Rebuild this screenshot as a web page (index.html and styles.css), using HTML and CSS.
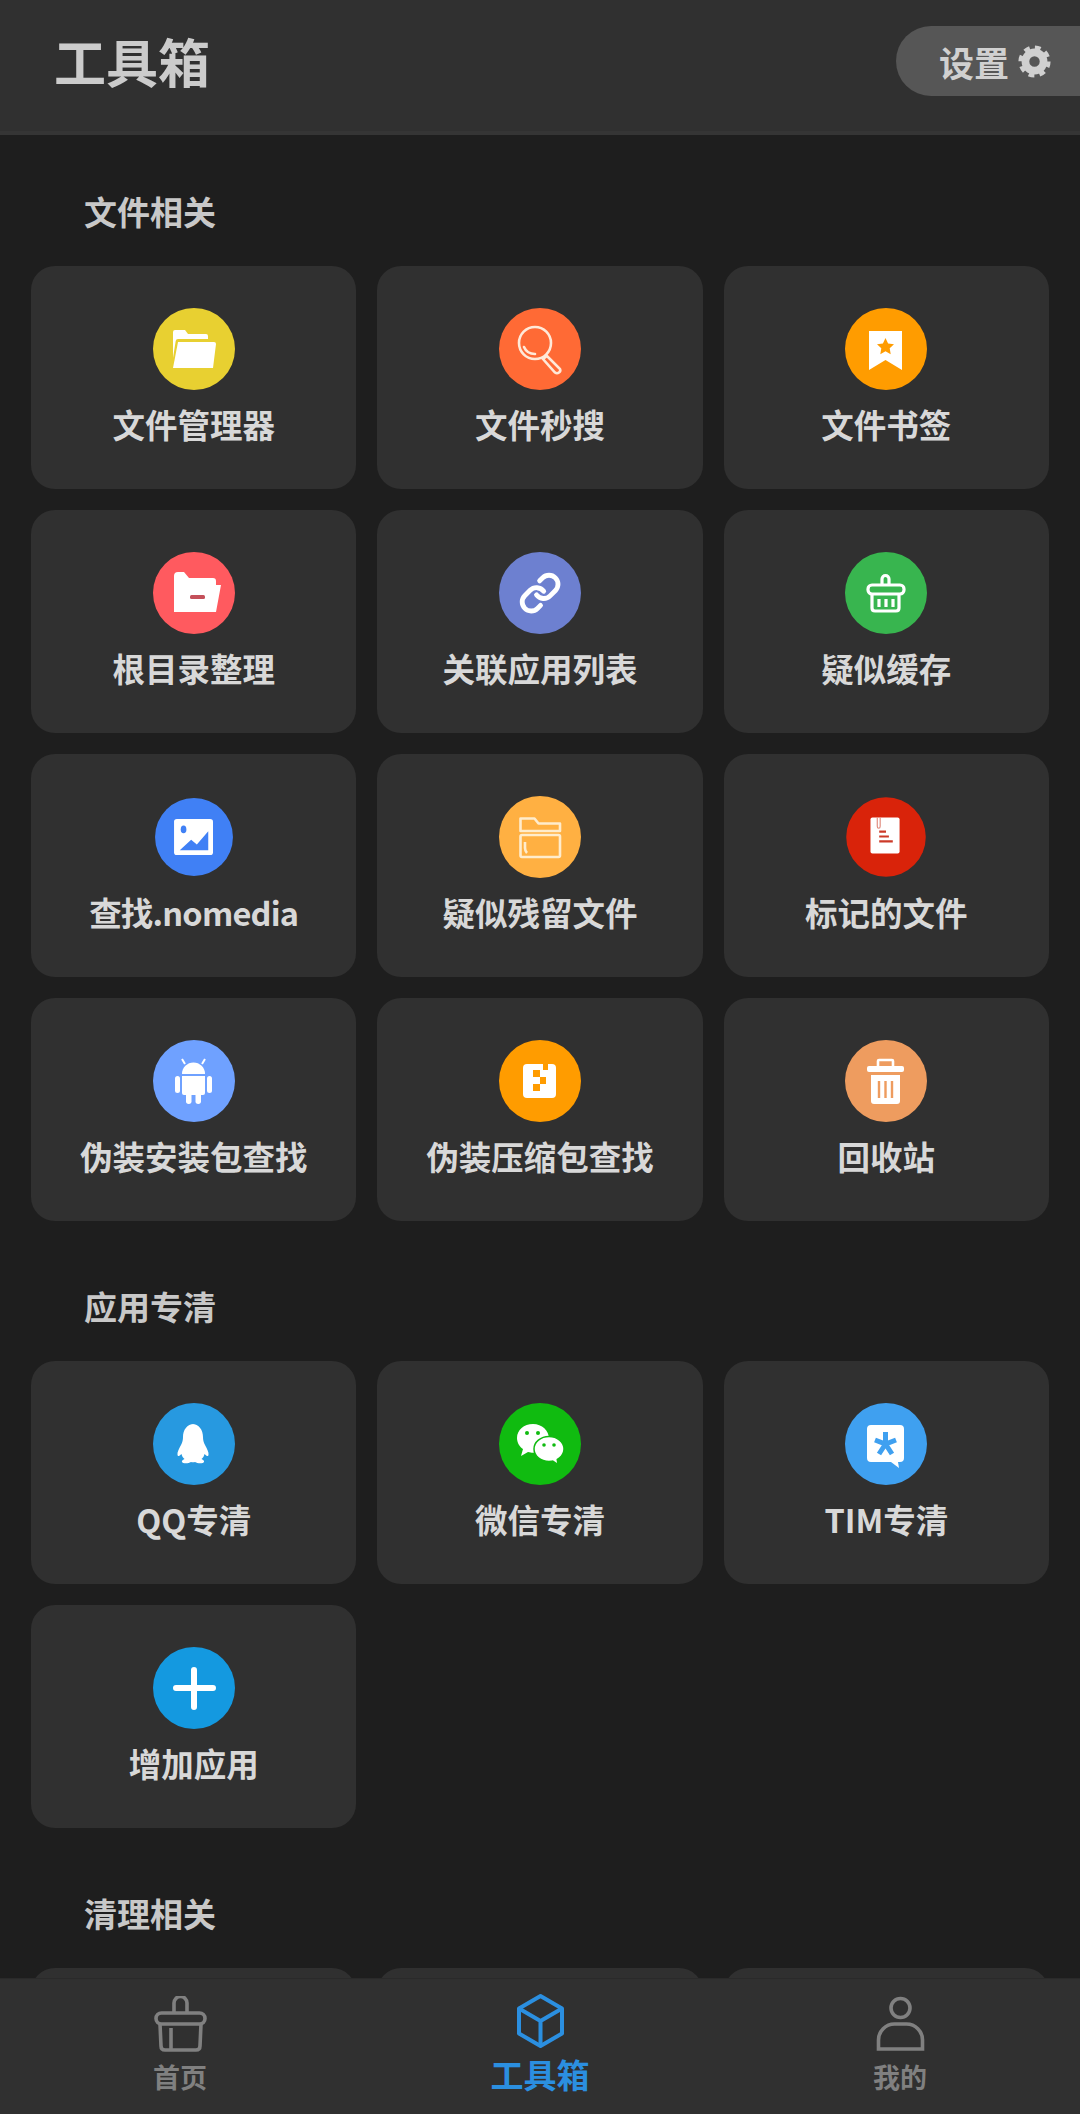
FILE: index.html
```html
<!DOCTYPE html>
<html lang="zh-CN">
<head>
    <meta charset="UTF-8">
    <meta name="viewport" content="width=device-width, initial-scale=1.0">
    <title>工具箱</title>
    <link rel="stylesheet" href="styles.css">
</head>
<body>
<div class="app">
  <header class="topbar">
    <h1>工具箱</h1>
    <div class="settings">
      <span>设置</span>
      <svg class="gear" viewBox="0 0 24 24">
        <circle cx="12" cy="12" r="6.6" fill="none" stroke="currentColor" stroke-width="5.6"/>
        <circle cx="12" cy="12" r="10.2" fill="none" stroke="currentColor" stroke-width="3" stroke-dasharray="4.2 3.81"/>
      </svg>
    </div>
  </header>

  <main class="content">
    <section class="section">
      <h2>文件相关</h2>
      <div class="grid">
        <div class="card">
          <span class="icon c-yellow"><svg viewBox="0 0 82 82">
            <path fill="#fff" d="M20 24q0-2 2-2h10l3 4h18q2 0 2 2v3H25q-2 0-2.3 2L20 50z"/>
            <path fill="#fff" d="M25 34h36q2 0 2 2l-3 24H20z"/>
          </svg></span>
          <p>文件管理器</p>
        </div>
        <div class="card">
          <span class="icon c-tomato"><svg viewBox="0 0 82 82">
            <g fill="none" stroke="#ffe9d8" stroke-width="2.6" stroke-linecap="round">
              <circle cx="36" cy="35" r="16"/>
              <path d="M25 39q3 7 11 7"/>
              <path d="M44 51l4-3 13 13q1 2-1 3.5t-4 0z"/>
            </g>
          </svg></span>
          <p>文件秒搜</p>
        </div>
        <div class="card">
          <span class="icon c-amber"><svg viewBox="0 0 82 82">
            <path fill="#fff" d="M24 23h33v39L40.5 52 24 62z"/>
            <path fill="currentColor" d="M40.5 30l2.6 5.4 5.9.8-4.3 4.1 1 5.9-5.2-2.9-5.2 2.9 1-5.9-4.3-4.1 5.900-.8z"/>
          </svg></span>
          <p>文件书签</p>
        </div>
        <div class="card">
          <span class="icon c-coral"><svg viewBox="0 0 82 82">
            <path fill="#fff" d="M21 24q0-4 4-4h6l5 6h24q3 0 3 3v4h5l-5 27H21z"/>
            <rect x="37" y="43" width="15" height="4" rx="1.5" fill="#c4505a"/>
          </svg></span>
          <p>根目录整理</p>
        </div>
        <div class="card">
          <span class="icon c-indigo"><svg viewBox="0 0 82 82">
            <g transform="translate(19.5 19.5) scale(1.8)" fill="none" stroke="#fff" stroke-width="2.7" stroke-linecap="round" stroke-linejoin="round">
              <path d="M10 13a5 5 0 0 0 7.54.54l3-3a5 5 0 0 0-7.07-7.07l-1.72 1.71"/>
              <path d="M14 11a5 5 0 0 0-7.54-.54l-3 3a5 5 0 0 0 7.07 7.07l1.71-1.71"/>
            </g>
          </svg></span>
          <p>关联应用列表</p>
        </div>
        <div class="card">
          <span class="icon c-green"><svg viewBox="0 0 82 82">
            <g fill="none" stroke="#fff" stroke-width="3.2" stroke-linejoin="round">
              <path d="M37 32v-5a3.5 3.5 0 0 1 7 0v5"/>
              <rect x="23" y="33" width="36" height="9" rx="4"/>
              <path d="M27 42v14q0 3 3 3h21q3 0 3-3V42"/>
              <path d="M34 47v8M41 47v8M48 47v8"/>
            </g>
          </svg></span>
          <p>疑似缓存</p>
        </div>
        <div class="card">
          <span class="icon c-blue"><svg viewBox="0 0 82 82">
            <rect x="20" y="22" width="41" height="38" rx="3" fill="#fff"/>
            <ellipse cx="30" cy="33" rx="3" ry="4" fill="currentColor"/>
            <path fill="currentColor" d="M26 55l12-11 6 5 12-14v20z"/>
          </svg></span>
          <p class="tight">查找.nomedia</p>
        </div>
        <div class="card">
          <span class="icon c-sand"><svg viewBox="0 0 82 82">
            <g fill="none" stroke="#ffeccc" stroke-width="2.6" stroke-linejoin="round">
              <path d="M21.5 35V22.5h14l4 5h21.5V35z"/>
              <rect x="21.5" y="39" width="39.5" height="22" rx="1.5"/>
              <path d="M26 46v6q0 3 2 5"/>
            </g>
          </svg></span>
          <p>疑似残留文件</p>
        </div>
        <div class="card">
          <span class="icon c-red"><svg viewBox="0 0 82 82">
            <rect x="25" y="21" width="30" height="37" rx="2" fill="#fff"/>
            <path d="M32 21v9q0 2 1.5 2t1.5-2v-9" fill="none" stroke="#e08b7e" stroke-width="1.2"/>
            <path d="M34 35.5h7M34 40.5h10M34 45.5h14" stroke="#cc3a28" stroke-width="2.2"/>
          </svg></span>
          <p>标记的文件</p>
        </div>
        <div class="card">
          <span class="icon c-peri"><svg viewBox="0 0 82 82">
            <g fill="#fff">
              <path d="M29 34a11.5 11.5 0 0 1 23 0z"/>
              <path d="M32 24l-3-5M49 24l3-5" stroke="#fff" stroke-width="2"/>
              <path d="M29 36h23v17q0 2-2 2H31q-2 0-2-2z"/>
              <rect x="22" y="36" width="5" height="17" rx="2.5"/>
              <rect x="54" y="36" width="5" height="17" rx="2.5"/>
              <rect x="33" y="50" width="5.5" height="14" rx="2.7"/>
              <rect x="42.5" y="50" width="5.5" height="14" rx="2.7"/>
            </g>
          </svg></span>
          <p>伪装安装包查找</p>
        </div>
        <div class="card">
          <span class="icon c-amber"><svg viewBox="0 0 82 82">
            <rect x="24" y="24" width="33" height="34" rx="4" fill="#fff"/>
            <path fill="currentColor" d="M44 24h5v6h-5zM34 30h7v7h-7zM41 37h6v7h-6zM34 44h7v7h-7z"/>
          </svg></span>
          <p>伪装压缩包查找</p>
        </div>
        <div class="card">
          <span class="icon c-clay"><svg viewBox="0 0 82 82">
            <path d="M33 26v-5q0-1 1-1h13q1 0 1 1v5" fill="none" stroke="#fff" stroke-width="2.6"/>
            <rect x="22" y="26" width="37" height="6" rx="2" fill="#fff"/>
            <path fill="#fff" d="M26 35h29v26q0 3-3 3H29q-3 0-3-3z"/>
            <path d="M34 41v17M40.5 41v17M47 41v17" stroke="currentColor" stroke-width="2.4"/>
          </svg></span>
          <p>回收站</p>
        </div>
      </div>
    </section>

    <section class="section">
      <h2>应用专清</h2>
      <div class="grid">
        <div class="card">
          <span class="icon c-qq"><svg viewBox="0 0 82 82">
            <path fill="#fff" d="M41 21c-7 0-11 6-11 13 0 3-.5 5-2 8-2 4-4 7-3.5 10 .3 2 2 1 4-1 .5 2 1.5 4 3 5-2 1-3 2-2.5 3 .5 1.5 6 2 9 0 1 .3 3 .3 4 0 3 2 8.5 1.5 9 0 .5-1-.5-2-2.5-3 1.5-1 2.5-3 3-5 2 2 3.700 3 4 1 .5-3-1.5-6-3.5-10-1.5-3-2-5-2-8 0-7-4-13-11-13z"/>
          </svg></span>
          <p>QQ专清</p>
        </div>
        <div class="card">
          <span class="icon c-wechat"><svg viewBox="0 0 82 82">
            <path fill="#fff" d="M34 21c-9 0-16 6-16 14 0 5 3 9 6 11l-2 7 7-4c2 .6 3.5.7 5 .7 9 0 16-6 16-14s-7-14.7-16-14.7z"/>
            <ellipse cx="50" cy="46" rx="15" ry="12.5" fill="#fff" stroke="currentColor" stroke-width="1.5"/>
            <path fill="#fff" d="M52 56l6 4-1-7z"/>
            <g fill="currentColor">
              <circle cx="28" cy="30" r="2"/><circle cx="39" cy="30" r="2"/>
              <circle cx="45" cy="42" r="1.8"/><circle cx="55" cy="42" r="1.8"/>
            </g>
          </svg></span>
          <p>微信专清</p>
        </div>
        <div class="card">
          <span class="icon c-tim"><svg viewBox="0 0 82 82">
            <path fill="#fff" d="M26 22h29q4 0 4 4v29q0 4-4 4h-2l1 6-8-6H26q-4 0-4-4V26q0-4 4-4z"/>
            <path d="M40.5 29v12M30 37l10.5 4 10.5-4M40.5 41l-6.5 10M40.5 41l6.5 10" fill="none" stroke="currentColor" stroke-width="5"/>
          </svg></span>
          <p>TIM专清</p>
        </div>
        <div class="card">
          <span class="icon c-plus"><svg viewBox="0 0 82 82">
            <path d="M41 23v37M23 41h37" stroke="#fff" stroke-width="6" stroke-linecap="round"/>
          </svg></span>
          <p>增加应用</p>
        </div>
      </div>
    </section>

    <section class="section">
      <h2>清理相关</h2>
      <div class="grid">
        <div class="card"></div>
        <div class="card"></div>
        <div class="card"></div>
      </div>
    </section>
  </main>

  <nav class="tabbar">
    <div class="tab">
      <svg viewBox="0 0 53 56" fill="none" stroke="currentColor" stroke-width="3.6" stroke-linejoin="round">
        <path d="M20 17V7a6.5 6.5 0 0 1 13 0v10"/>
        <rect x="2" y="17" width="49" height="11" rx="5.5"/>
        <path d="M6 28l1 22q0 4 4 4h31q4 0 4-4l1-22"/>
        <path d="M17 32v22"/>
      </svg>
      <span>首页</span>
    </div>
    <div class="tab active">
      <svg viewBox="0 0 49 56" fill="none" stroke="currentColor" stroke-width="4" stroke-linejoin="round">
        <path d="M24.5 3L46 15.5v25L24.5 53 3 40.5v-25z"/>
        <path d="M3 15.5L24.5 28 46 15.5M24.5 28v25"/>
      </svg>
      <span>工具箱</span>
    </div>
    <div class="tab">
      <svg viewBox="0 0 50 56" fill="none" stroke="currentColor" stroke-width="3.6">
        <circle cx="25" cy="12" r="9.5"/>
        <path d="M3 53V44a16 16 0 0 1 16-16h12a16 16 0 0 1 16 16v9z"/>
      </svg>
      <span>我的</span>
    </div>
  </nav>
</div>
</body>
</html>
```

FILE: styles.css
```css
body {
    margin: 0;
    background-color: #1e1e1e;
    font-family: "Noto Sans CJK SC", "Noto Sans", sans-serif;
    color: #d8d8d8;
}
.app {
    height: 100vh;
    display: flex;
    flex-direction: column;
    overflow: hidden;
}

/* top bar */
.topbar {
    flex: none;
    height: 131px;
    border-bottom: 4px solid #353535;
    background-color: #303030;
    display: flex;
    justify-content: space-between;
    align-items: flex-start;
    padding-left: 54px;
}
.topbar h1 {
    margin: 23px 0 0;
    font-size: 52px;
    line-height: 76px;
    font-weight: 700;
    color: #cbcbcb;
}
.settings {
    margin-top: 26px;
    width: 184px;
    height: 70px;
    box-sizing: border-box;
    padding-left: 43px;
    border-radius: 35px 0 0 35px;
    background-color: #565656;
    display: flex;
    align-items: center;
    gap: 9px;
    font-size: 35px;
    font-weight: 700;
    color: #d0d0d0;
}
.gear {
    width: 33px;
    height: 33px;
}

/* sections */
.content {
    flex: 1;
    overflow: hidden;
}
.section {
    margin-top: 64px;
}
.section:first-child {
    margin-top: 55px;
}
.section h2 {
    margin: 0 0 30px;
    padding-left: 84px;
    padding-bottom: 4px;
    font-size: 33px;
    line-height: 42px;
    font-weight: 700;
    color: #c8c8c8;
}
.grid {
    padding: 0 31px;
    display: grid;
    grid-template-columns: repeat(3, 1fr);
    grid-auto-rows: 223px;
    gap: 21px;
}
.card {
    background-color: #303030;
    border-radius: 24px;
    padding-top: 42px;
    box-sizing: border-box;
    display: flex;
    flex-direction: column;
    align-items: center;
}
.card p {
    margin: 11px 0 0;
    font-size: 32.5px;
    line-height: 46px;
    font-weight: 700;
    color: #d8d8d8;
    white-space: nowrap;
}
.card p.tight {
    letter-spacing: -0.8px;
}

/* round icons */
.icon {
    width: 82px;
    height: 82px;
    border-radius: 50%;
    display: block;
}
.icon svg {
    display: block;
    width: 82px;
    height: 82px;
}
.c-yellow { background-color: #e8d031; color: #e8d031; }
.c-tomato { background-color: #ff6a35; color: #ff6a35; }
.c-amber { background-color: #ff9c00; color: #ff9c00; }
.c-coral { background-color: #ff5a5f; color: #ff5a5f; }
.c-indigo { background-color: #6d80d0; color: #6d80d0; }
.c-green { background-color: #38b54f; color: #38b54f; }
.c-blue { background-color: #4080f5; color: #4080f5; transform: scale(0.95); }
.c-sand { background-color: #ffb042; color: #ffb042; }
.c-red { background-color: #d9230a; color: #d9230a; transform: scale(0.97); }
.c-peri { background-color: #6fa1ff; color: #6fa1ff; }
.c-clay { background-color: #ee9c5f; color: #ee9c5f; }
.c-qq { background-color: #2799e0; color: #2799e0; }
.c-wechat { background-color: #10bb10; color: #10bb10; }
.c-tim { background-color: #3fa0f0; color: #3fa0f0; }
.c-plus { background-color: #1499e0; color: #1499e0; }

/* bottom tabs */
.tabbar {
    flex: none;
    height: 136px;
    box-sizing: border-box;
    border-top: 1px solid #2a2a2a;
    background-color: #303030;
    display: grid;
    grid-template-columns: repeat(3, 1fr);
}
.tab {
    display: flex;
    flex-direction: column;
    align-items: center;
    padding-top: 17px;
    color: #808080;
    font-size: 27px;
    font-weight: 700;
    line-height: 38px;
}
.tab svg {
    width: 53px;
    height: 56px;
    margin-bottom: 6px;
}
.tab.active {
    padding-top: 14px;
    color: #2b8fe0;
    font-size: 33px;
}
```
